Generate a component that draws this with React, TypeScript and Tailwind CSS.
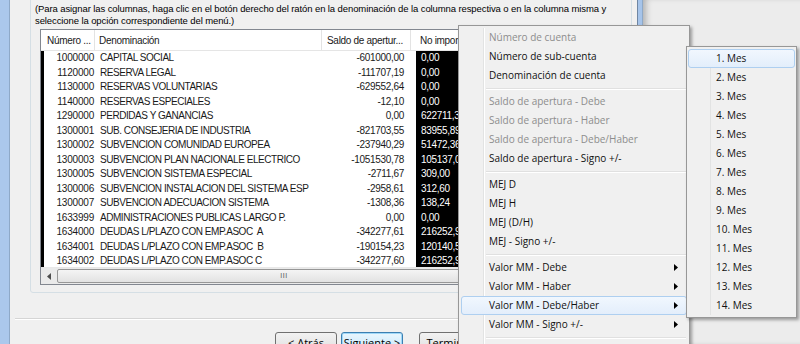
import React from "react";

type Row = { num: string; name: string; saldo: string; extra: string };

const rows: Row[] = [
  { num: "1000000", name: "CAPITAL SOCIAL", saldo: "-601000,00", extra: "0,00" },
  { num: "1120000", name: "RESERVA LEGAL", saldo: "-111707,19", extra: "0,00" },
  { num: "1130000", name: "RESERVAS VOLUNTARIAS", saldo: "-629552,64", extra: "0,00" },
  { num: "1140000", name: "RESERVAS ESPECIALES", saldo: "-12,10", extra: "0,00" },
  { num: "1290000", name: "PERDIDAS Y GANANCIAS", saldo: "0,00", extra: "622711,33" },
  { num: "1300001", name: "SUB. CONSEJERIA DE INDUSTRIA", saldo: "-821703,55", extra: "83955,89" },
  { num: "1300002", name: "SUBVENCION COMUNIDAD EUROPEA", saldo: "-237940,29", extra: "51472,36" },
  { num: "1300003", name: "SUBVENCION PLAN NACIONALE ELECTRICO", saldo: "-1051530,78", extra: "105137,05" },
  { num: "1300005", name: "SUBVENCION SISTEMA ESPECIAL", saldo: "-2711,67", extra: "309,00" },
  { num: "1300006", name: "SUBVENCION INSTALACION DEL SISTEMA ESP", saldo: "-2958,61", extra: "312,60" },
  { num: "1300007", name: "SUBVENCION ADECUACION SISTEMA", saldo: "-1308,36", extra: "138,24" },
  { num: "1633999", name: "ADMINISTRACIONES PUBLICAS LARGO P.", saldo: "0,00", extra: "0,00" },
  { num: "1634000", name: "DEUDAS L/PLAZO CON EMP.ASOC  A", saldo: "-342277,61", extra: "216252,95" },
  { num: "1634001", name: "DEUDAS L/PLAZO CON EMP.ASOC  B", saldo: "-190154,23", extra: "120140,53" },
  { num: "1634002", name: "DEUDAS L/PLAZO CON EMP.ASOC C", saldo: "-342277,60", extra: "216252,95" },
];

type MenuEntry =
  | { sep: true }
  | { sep?: false; label: string; disabled?: boolean; sub?: boolean; active?: boolean };

const menu: MenuEntry[] = [
  { label: "Número de cuenta", disabled: true },
  { label: "Número de sub-cuenta" },
  { label: "Denominación de cuenta" },
  { sep: true },
  { label: "Saldo de apertura - Debe", disabled: true },
  { label: "Saldo de apertura - Haber", disabled: true },
  { label: "Saldo de apertura - Debe/Haber", disabled: true },
  { label: "Saldo de apertura - Signo +/-" },
  { sep: true },
  { label: "MEJ D" },
  { label: "MEJ H" },
  { label: "MEJ (D/H)" },
  { label: "MEJ - Signo +/-" },
  { sep: true },
  { label: "Valor MM - Debe", sub: true },
  { label: "Valor MM - Haber", sub: true },
  { label: "Valor MM - Debe/Haber", sub: true, active: true },
  { label: "Valor MM - Signo +/-", sub: true },
  { sep: true },
];

const meses = Array.from({ length: 14 }, (_, i) => `${i + 1}. Mes`);

function Arrow() {
  return (
    <svg width="4" height="7" viewBox="0 0 4 7" className="block">
      <path d="M0 0 L4 3.5 L0 7 Z" fill="#000" />
    </svg>
  );
}

function ContextMenu() {
  return (
    <div className="absolute left-[458px] top-[25px] w-[232px] h-[330px] border border-[#979797] bg-[#f0f0f0] shadow-[2px_2px_3px_rgba(0,0,0,0.35)] pt-[2px] font-['Open_Sans',sans-serif] text-[10px]">
      <div className="absolute left-[24px] top-[2px] bottom-0 w-px bg-[#e2e3e3]" />
      <div className="absolute left-[25px] top-[2px] bottom-0 w-px bg-white" />
      {menu.map((m, i) =>
        m.sep ? (
          <div key={i} className="h-[7px] ml-[27px] mr-[3px] flex flex-col justify-center">
            <div className="h-px bg-[#e0e0e0]" />
            <div className="h-px bg-white" />
          </div>
        ) : (
          <div
            key={i}
            className={
              "relative mx-[2px] h-[19px] flex items-center pl-[27px] pr-[8px] rounded-[3px] border " +
              (m.active
                ? "border-[#aecff0] bg-[linear-gradient(#f1f7fe,#e3eefb)]"
                : "border-transparent")
            }
          >
            <span className={"flex-1 " + (m.disabled ? "text-[#8d8d8d]" : "text-[#111]")}>{m.label}</span>
            {m.sub && <Arrow />}
          </div>
        )
      )}
    </div>
  );
}

function SubMenu() {
  return (
    <div className="absolute left-[686px] top-[46px] w-[111px] border border-[#979797] bg-[#f0f0f0] shadow-[2px_2px_3px_rgba(0,0,0,0.35)] py-[2px] font-['Open_Sans',sans-serif] text-[10px] text-[#111]">
      <div className="absolute left-[23px] top-[2px] bottom-[2px] w-px bg-[#e2e3e3]" />
      {meses.map((m, i) => (
        <div
          key={m}
          className={
            "relative mx-[1px] h-[19px] flex items-center pl-[27px] rounded-[3px] border " +
            (i === 0 ? "border-[#aecff0] bg-[linear-gradient(#f1f7fe,#e3eefb)]" : "border-transparent")
          }
        >
          {m}
        </div>
      ))}
    </div>
  );
}

function ListView() {
  return (
    <div className="ml-[5px] mt-[2px] w-[590px] h-[256px] shrink-0 border border-[#828790] bg-white flex flex-col overflow-hidden font-['Liberation_Sans',sans-serif] text-[10px] text-[#1a1a1a]">
      <div className="h-[21px] flex items-center bg-white border-b border-[#e5e5e5] tracking-[-0.3px] shrink-0">
        <div className="w-[54px] pl-[6px] border-r border-[#e3e3e3] h-full flex items-center">Número ...</div>
        <div className="w-[227px] pl-[4px] border-r border-[#e3e3e3] h-full flex items-center">Denominación</div>
        <div className="w-[89px] pl-[5px] border-r border-[#e3e3e3] h-full flex items-center">Saldo de apertur...</div>
        <div className="flex-1 pl-[9px] h-full flex items-center">No importa</div>
      </div>
      <div className="flex-1 overflow-hidden border-l-[3px] border-black">
        {rows.map((r) => (
          <div key={r.num} className="h-[14.5px] flex items-center leading-none">
            <div className="w-[51px] text-right pr-[1px] tracking-[-0.2px]">{r.num}</div>
            <div className="w-[227px] pl-[5px] whitespace-pre tracking-[-0.45px]">{r.name}</div>
            <div className="w-[89px] text-right pr-[7px] tracking-[-0.3px]">{r.saldo}</div>
            <div className="flex-1 ml-[5px] h-full bg-black text-white pl-[5px] flex items-center tracking-[-0.3px]">{r.extra}</div>
          </div>
        ))}
      </div>
      <div className="h-[17px] shrink-0 flex bg-[#eaeaea] border-t border-[#e8e8e8]">
        <div className="w-[16px] flex items-center justify-center">
          <svg width="4" height="7" viewBox="0 0 4 7">
            <path d="M4 0 L0 3.5 L4 7 Z" fill="#4d4d4d" />
          </svg>
        </div>
        <div className="w-[540px] my-px rounded-[2px] border border-[#979797] bg-[linear-gradient(#f4f4f4,#e2e2e2)] flex items-center justify-center">
          <span className="text-[7px] tracking-[0.5px] text-[#555] -ml-[86px]">III</span>
        </div>
      </div>
    </div>
  );
}

function Button({ label, focus }: { label: string; focus?: boolean }) {
  return (
    <div
      className={
        "w-[62px] h-[23px] shrink-0 rounded-[3px] border flex items-center justify-center text-[11px] font-['Open_Sans',sans-serif] " +
        (focus
          ? "border-[#3c7fb1] bg-[linear-gradient(#eaf6fd,#bee6fd)] shadow-[inset_0_0_0_1px_#9fd8f8]"
          : "border-[#707070] bg-[linear-gradient(#f2f2f2,#dddddd)]")
      }
    >
      {label}
    </div>
  );
}

export default function App() {
  return (
    <div className="relative w-[800px] h-[344px] overflow-hidden flex bg-[#ededed] font-['Liberation_Sans',sans-serif]">
      <div className="w-[10px] shrink-0 bg-[#abc8ec] border-r border-[#8ea9c8]" />
      <div className="w-[627px] shrink-0 bg-[#f0f0f0] flex flex-col">
        <div className="ml-[20px] -mt-[10px] w-[602px] h-[303px] shrink-0 border border-[#d5dfe5] rounded-[3px] pt-[12px] pl-[4px]">
          <p className="text-[9.5px] leading-[12px] text-black tracking-[-0.1px]">
            (Para asignar las columnas, haga clic en el botón derecho del ratón en la denominación de la columna respectiva o en la columna misma y
            <br />
            seleccione la opción correspondiente del menú.)
          </p>
          <ListView />
        </div>
        <div className="ml-[5px] mt-[25px] shrink-0">
          <div className="h-px bg-[#d5d5d5]" />
          <div className="h-px bg-white" />
        </div>
        <div className="mt-[12px] flex gap-[4px] pl-[265px] shrink-0">
          <Button label="< Atrás" />
          <Button label="Siguiente >" focus />
          <div className="w-[8px]" />
          <Button label="Terminar" />
        </div>
      </div>
      <div className="w-[6px] shrink-0 bg-[#a6c4ea] border-l border-[#6f86a3] border-r border-r-[#8ea9c8]" />
      <div className="flex-1 bg-[#ececec] shadow-[inset_6px_0_6px_-3px_rgba(0,0,0,0.25)]" />
      <ContextMenu />
      <SubMenu />
    </div>
  );
}
